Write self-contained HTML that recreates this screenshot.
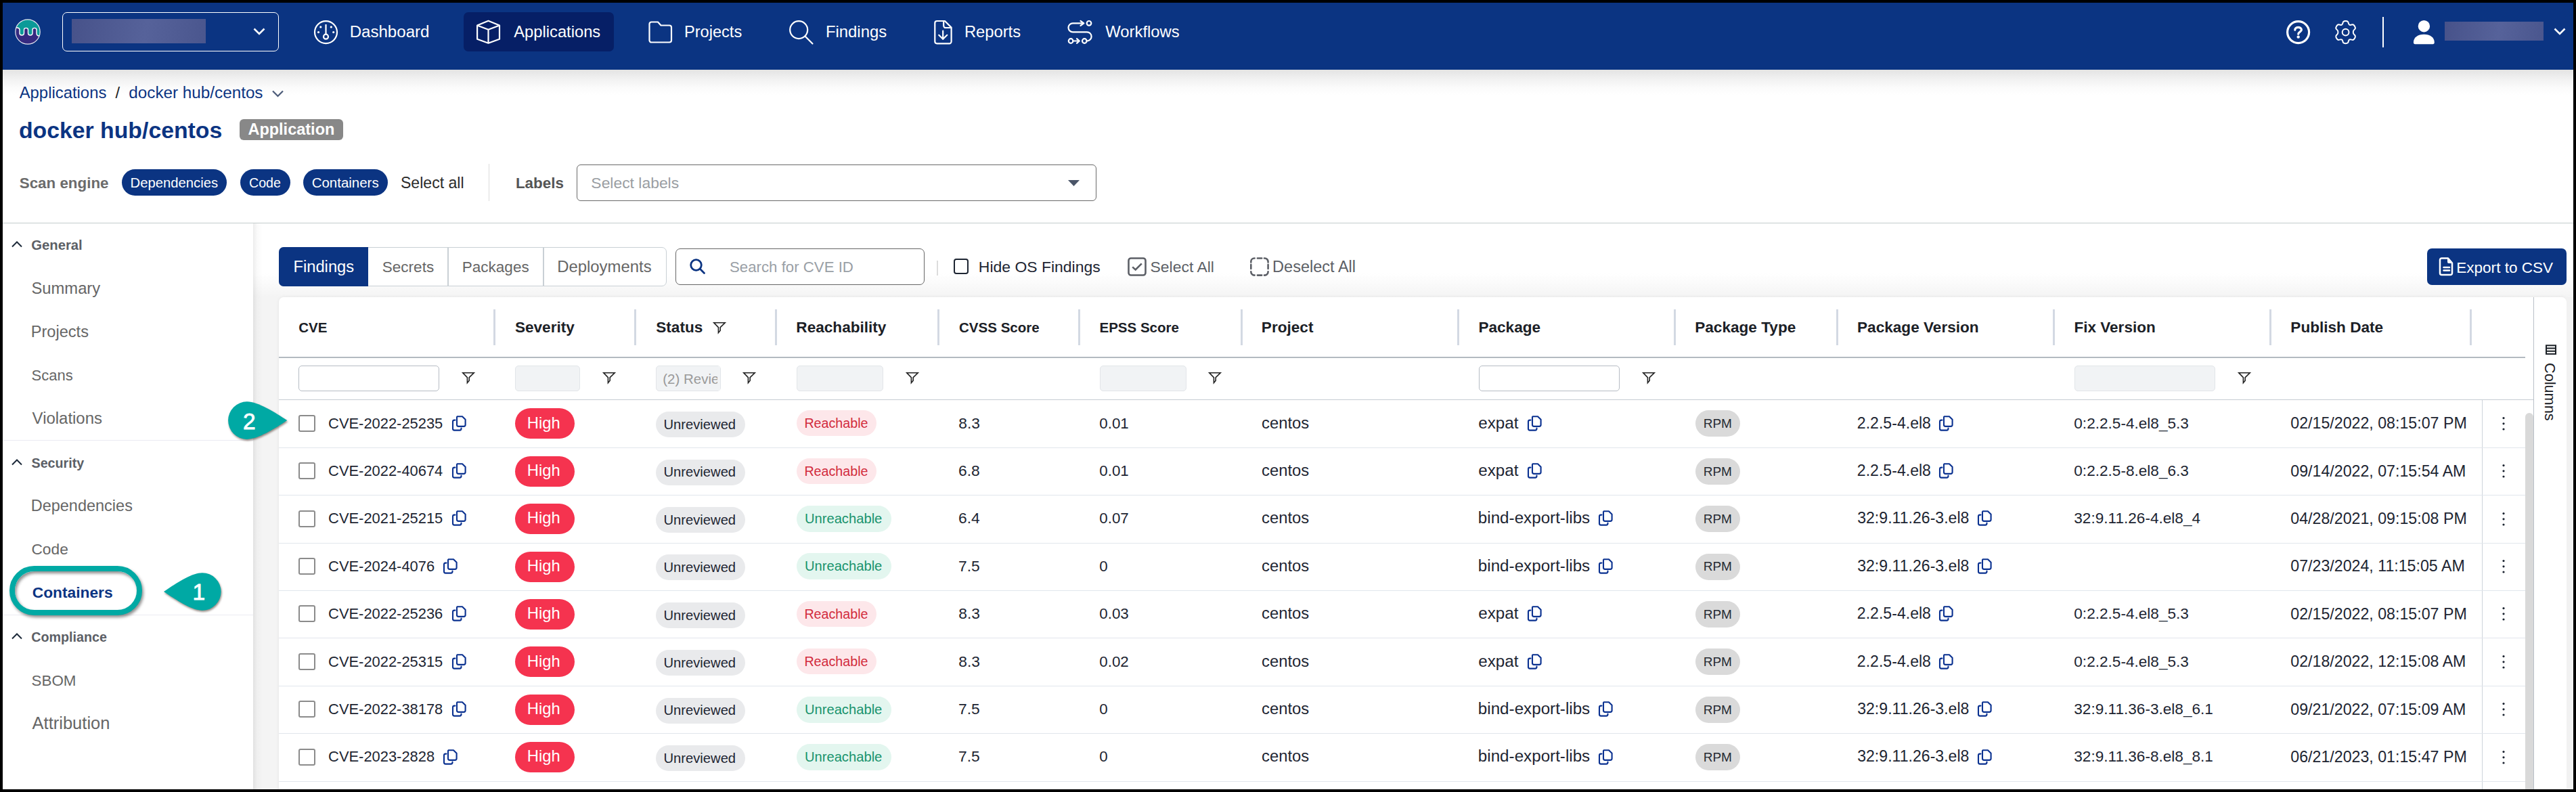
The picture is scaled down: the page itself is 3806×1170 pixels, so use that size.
<!DOCTYPE html>
<html><head><meta charset="utf-8"><title>docker hub/centos</title><style>*{margin:0;padding:0}
html,body{width:3806px;height:1170px;overflow:hidden;background:#000}
body{position:relative;font-family:"Liberation Sans",sans-serif}
.r{position:absolute;display:block}
.t{position:absolute;white-space:nowrap;font-family:"Liberation Sans",sans-serif}
</style></head>
<body>
<div class="r" style="left:4px;top:4px;width:3798px;height:1162px;background:#fff"></div>
<div class="r" style="left:4px;top:4px;width:3798px;height:99px;background:#0b3482"></div><svg class="r" style="left:20px;top:26px;" width="42" height="42" viewBox="0 0 42 42">
<defs><clipPath id="lc"><circle cx="21" cy="21" r="18.2"/></clipPath></defs>
<circle cx="21" cy="21" r="18.2" fill="#352a80"/>
<g clip-path="url(#lc)">
<path d="M0,0 H42 V27 L38,27 C36,27 34,26 34,23 V18 C34,14.5 28,14.5 28,18 V23 C28,27 21.5,27 21.5,23 V18 C21.5,14.5 15.5,14.5 15.5,18 V23 C15.5,27 9,27 9,23 V18 C9,14.5 4,14 0,16 Z" fill="#0b9a98" stroke="#fff" stroke-width="1.4"/>
</g>
<circle cx="21" cy="21" r="18.2" fill="none" stroke="#e8e8f0" stroke-width="1.2"/>
</svg><div class="r" style="left:92px;top:18px;width:320px;height:58px;border:1.6px solid #fff;border-radius:7px;box-sizing:border-box"></div><div class="r" style="left:106px;top:28px;width:198px;height:36px;background:linear-gradient(100deg,#47528a,#56629a 55%,#4a568e);"></div><svg class="r" style="left:372px;top:38px;" width="22" height="18" viewBox="0 0 22 18"><path d="M3.5,4.5 L11,12 L18.5,4.5" fill="none" stroke="#fff" stroke-width="2.6"/></svg><svg class="r" style="left:462px;top:28px;" width="40" height="40" viewBox="0 0 40 40"><g fill="none" stroke="#fff" stroke-width="2.2">
<circle cx="19.5" cy="19.6" r="16.5"/><line x1="19.5" y1="8" x2="19.5" y2="22.5"/><circle cx="19.5" cy="26.2" r="3.5"/></g>
<g fill="#fff"><circle cx="11.8" cy="11.9" r="1.6"/><circle cx="27.3" cy="11.9" r="1.6"/><circle cx="8.5" cy="19.6" r="1.6"/><circle cx="30.7" cy="19.6" r="1.6"/></g></svg><div class="t" style="left:516.67px;top:33.30px;font-size:24.08px;line-height:27px;color:#fff;">Dashboard</div><div class="r" style="left:685px;top:18px;width:222px;height:58px;background:#061f66;border-radius:7px"></div><svg class="r" style="left:700px;top:27px;" width="44" height="42" viewBox="0 0 44 42"><g fill="none" stroke="#fff" stroke-width="2.2" stroke-linejoin="round">
<path d="M21.5,3.8 L38,10.5 V30.7 L21.5,36.7 L5.1,30.7 V10.5 Z"/><path d="M5.1,10.5 L21.5,16.8 L38,10.5 M21.5,16.8 V36.7"/></g></svg><div class="t" style="left:759.30px;top:34.30px;font-size:23.73px;line-height:26px;color:#fff;">Applications</div><svg class="r" style="left:955px;top:29px;" width="42" height="38" viewBox="0 0 42 38"><path d="M4.5,6.5 A3,3 0 0 1 7.5,3.5 H17 L21.5,8.5 H34 A3,3 0 0 1 37,11.5 V30.5 A3,3 0 0 1 34,33.5 H7.5 A3,3 0 0 1 4.5,30.5 Z" fill="none" stroke="#fff" stroke-width="2.2" stroke-linejoin="round"/></svg><div class="t" style="left:1010.91px;top:34.30px;font-size:23.61px;line-height:26px;color:#fff;">Projects</div><svg class="r" style="left:1162px;top:27px;" width="44" height="42" viewBox="0 0 44 42"><g fill="none" stroke="#fff" stroke-width="2.2"><circle cx="18.2" cy="17.1" r="13"/><line x1="27.5" y1="26.5" x2="38.5" y2="37.5" stroke-linecap="round"/></g></svg><div class="t" style="left:1219.89px;top:33.30px;font-size:23.90px;line-height:27px;color:#fff;">Findings</div><svg class="r" style="left:1377px;top:27px;" width="34" height="42" viewBox="0 0 34 42"><g fill="none" stroke="#fff" stroke-width="2.2" stroke-linejoin="round">
<path d="M7.3,4 H19 L28.6,13.6 V34.3 A3,3 0 0 1 25.6,37.3 H7.3 A3,3 0 0 1 4.3,34.3 V7 A3,3 0 0 1 7.3,4 Z"/>
<path d="M17.2,4 V11 A3,3 0 0 0 20.2,14 H28.6"/>
<path d="M16.2,18.7 V31 M10.2,24.8 L16.2,30.8 L22.3,24.8" stroke-linecap="round"/></g></svg><div class="t" style="left:1424.90px;top:33.30px;font-size:23.75px;line-height:27px;color:#fff;">Reports</div><svg class="r" style="left:1574px;top:27px;" width="44" height="42" viewBox="0 0 44 42"><g fill="none" stroke="#fff" stroke-width="2.2" stroke-linecap="round" stroke-linejoin="round">
<path d="M26.5,7.3 H11 A6.5,6.5 0 0 0 11,20.3 H32 A6.6,6.6 0 0 1 32,33.5 H31.5"/>
<path d="M22.5,3.8 L27.3,7.3 L22.5,10.8"/>
<circle cx="35" cy="7.3" r="3.3"/><circle cx="28.3" cy="33.5" r="3.3"/><circle cx="8.1" cy="33.5" r="3.3"/>
<path d="M11.5,33.5 H20.5 M17,30.2 L20.8,33.5 L17,36.8"/></g></svg><div class="t" style="left:1633.30px;top:33.30px;font-size:23.84px;line-height:27px;color:#fff;">Workflows</div><svg class="r" style="left:3374px;top:26px;" width="44" height="44" viewBox="0 0 44 44"><g fill="none" stroke="#fff" stroke-width="3.2"><circle cx="21.6" cy="21.6" r="16"/>
<path d="M16.8,18.2 C16.8,13.2 26.4,13.2 26.4,18 C26.4,21 21.7,21.5 21.7,24.2" stroke-linecap="round"/></g><circle cx="21.7" cy="28.6" r="2.2" fill="#fff"/></svg><svg class="r" style="left:3444px;top:26px;" width="44" height="44" viewBox="0 0 44 44"><g fill="none" stroke="#fff" stroke-width="2.1" stroke-linejoin="round" transform="translate(21.6 21.6) scale(0.94) translate(-21.6 -21.6)">
<path d="M17.9,5.2 C19.5,3.6 23.7,3.6 25.3,5.2 C26,6 26,9.2 27.6,10 C29.2,10.9 31.9,9.2 33.1,9.5 C35.2,10.1 37.3,13.8 36.7,15.9 C36.4,17 33.6,18.5 33.6,20.3 V22.9 C33.6,24.7 36.4,26.2 36.7,27.3 C37.3,29.4 35.2,33.1 33.1,33.7 C31.9,34 29.2,32.3 27.6,33.2 C26,34 26,37.2 25.3,38 C23.7,39.6 19.5,39.6 17.9,38 C17.2,37.2 17.2,34 15.6,33.2 C14,32.3 11.3,34 10.1,33.7 C8,33.1 5.9,29.4 6.5,27.3 C6.8,26.2 9.6,24.7 9.6,22.9 V20.3 C9.6,18.5 6.8,17 6.5,15.9 C5.9,13.8 8,10.1 10.1,9.5 C11.3,9.2 14,10.9 15.6,10 C17.2,9.2 17.2,6 17.9,5.2 Z"/>
<circle cx="21.6" cy="21.6" r="5.2"/></g></svg><div class="r" style="left:3520px;top:25px;width:2px;height:45px;background:#fff"></div><svg class="r" style="left:3562px;top:26px;" width="38" height="42" viewBox="0 0 38 42"><g fill="#fff"><circle cx="19.4" cy="12.7" r="8.7"/><path d="M3.9,36.8 C3.9,29 10.5,24.7 19.4,24.7 C28.3,24.7 34.8,29 34.8,36.8 C34.8,38.3 34,39.3 32.5,39.3 H6.2 C4.7,39.3 3.9,38.3 3.9,36.8 Z"/></g></svg><div class="r" style="left:3612px;top:32px;width:146px;height:28px;background:linear-gradient(100deg,#47528a,#56629a 55%,#4a568e);"></div><svg class="r" style="left:3771px;top:38px;" width="22" height="18" viewBox="0 0 22 18"><path d="M3.5,4.5 L11,12 L18.5,4.5" fill="none" stroke="#fff" stroke-width="2.6"/></svg><div class="r" style="left:4px;top:103px;width:3798px;height:38px;background:linear-gradient(#e3e3e3,#f1f1f1 35%,#fbfbfb 70%,#fff)"></div><div class="t" style="left:28.70px;top:123.20px;font-size:23.87px;line-height:27px;color:#0b3482;">Applications</div><div class="t" style="left:170.60px;top:124.20px;font-size:23.70px;line-height:26px;color:#222;">/</div><div class="t" style="left:190.33px;top:123.20px;font-size:24.25px;line-height:27px;color:#0b3482;">docker hub/centos</div><svg class="r" style="left:399px;top:130px;" width="24" height="18" viewBox="0 0 24 18"><path d="M4,4.5 L11.5,12 L19,4.5" fill="none" stroke="#4b5a78" stroke-width="2.2"/></svg><div class="t" style="left:27.95px;top:173.30px;font-size:33.79px;line-height:38px;color:#0b3482;font-weight:700;">docker hub/centos</div><div class="r" style="left:354px;top:176px;width:153px;height:31px;background:#888;border-radius:6px"></div><div class="t" style="left:366.41px;top:178.00px;font-size:23.51px;line-height:26px;color:#fff;font-weight:700;">Application</div><div class="t" style="left:28.74px;top:257.50px;font-size:22.38px;line-height:25px;color:#6b6b6b;font-weight:700;">Scan engine</div><div class="r" style="left:180px;top:250px;width:155px;height:39px;background:#0b3482;border-radius:20px"></div><div class="t" style="left:192.58px;top:259.30px;font-size:20.25px;line-height:22px;color:#fff;">Dependencies</div><div class="r" style="left:355px;top:250px;width:74px;height:39px;background:#0b3482;border-radius:20px"></div><div class="t" style="left:368.02px;top:259.30px;font-size:19.65px;line-height:22px;color:#fff;">Code</div><div class="r" style="left:448px;top:250px;width:125px;height:39px;background:#0b3482;border-radius:20px"></div><div class="t" style="left:460.68px;top:258.30px;font-size:20.48px;line-height:23px;color:#fff;">Containers</div><div class="t" style="left:591.96px;top:256.50px;font-size:23.09px;line-height:26px;color:#2b2b2b;">Select all</div><div class="r" style="left:722px;top:242px;width:1px;height:55px;background:#dcdcdc"></div><div class="t" style="left:761.95px;top:257.50px;font-size:22.38px;line-height:25px;color:#555;font-weight:700;">Labels</div><div class="r" style="left:852px;top:243px;width:768px;height:54px;border:1.6px solid #6a6a6a;border-radius:6px;box-sizing:border-box;background:#fff"></div><div class="t" style="left:873.37px;top:256.50px;font-size:22.90px;line-height:26px;color:#9a9ea3;">Select labels</div><svg class="r" style="left:1576px;top:264px;" width="22" height="14" viewBox="0 0 22 14"><path d="M2,2 H19 L10.5,11 Z" fill="#4a5568"/></svg><div class="r" style="left:4px;top:329px;width:3798px;height:1px;background:#c3cbcb"></div><div class="r" style="left:4px;top:330px;width:370px;height:836px;background:#fff"></div><svg class="r" style="left:15px;top:353.6px;" width="20" height="14" viewBox="0 0 20 14"><path d="M3,10.5 L10,3.5 L17,10.5" fill="none" stroke="#1d2a3a" stroke-width="2"/></svg><div class="t" style="left:46.19px;top:351.00px;font-size:20.30px;line-height:22px;color:#5c5f66;font-weight:700;">General</div><div class="t" style="left:46.53px;top:412.00px;font-size:23.75px;line-height:27px;color:#666;">Summary</div><div class="t" style="left:45.71px;top:477.40px;font-size:23.61px;line-height:26px;color:#666;">Projects</div><div class="t" style="left:46.61px;top:542.20px;font-size:22.04px;line-height:25px;color:#666;">Scans</div><div class="t" style="left:47.60px;top:604.00px;font-size:23.94px;line-height:27px;color:#666;">Violations</div><div class="r" style="left:4px;top:650px;width:370px;height:1px;background:#ebebf2"></div><svg class="r" style="left:15px;top:676px;" width="20" height="14" viewBox="0 0 20 14"><path d="M3,10.5 L10,3.5 L17,10.5" fill="none" stroke="#1d2a3a" stroke-width="2"/></svg><div class="t" style="left:46.51px;top:672.50px;font-size:19.69px;line-height:22px;color:#5c5f66;font-weight:700;">Security</div><div class="t" style="left:45.72px;top:734.00px;font-size:23.49px;line-height:26px;color:#666;">Dependencies</div><div class="t" style="left:46.46px;top:798.00px;font-size:22.74px;line-height:26px;color:#666;">Code</div><div class="r" style="left:4px;top:908px;width:370px;height:1px;background:#ebebf2"></div><svg class="r" style="left:15px;top:933px;" width="20" height="14" viewBox="0 0 20 14"><path d="M3,10.5 L10,3.5 L17,10.5" fill="none" stroke="#1d2a3a" stroke-width="2"/></svg><div class="t" style="left:46.21px;top:929.60px;font-size:19.73px;line-height:22px;color:#5c5f66;font-weight:700;">Compliance</div><div class="t" style="left:46.59px;top:993.00px;font-size:22.38px;line-height:25px;color:#666;">SBOM</div><div class="t" style="left:47.60px;top:1054.00px;font-size:25.50px;line-height:28px;color:#666;">Attribution</div><div class="r" style="left:374px;top:330px;width:3428px;height:836px;background:linear-gradient(#fff 0px,#fff 74px,#f4f4f4 109px,#f4f4f4 100%)"></div><div class="r" style="left:374px;top:330px;width:38px;height:836px;background:linear-gradient(90deg,rgba(0,0,0,0.075),rgba(0,0,0,0.02) 6px,rgba(0,0,0,0) 14px)"></div><div class="r" style="left:412px;top:365px;width:573px;height:58px;border:1px solid #c9d0d5;border-radius:7px;box-sizing:border-box;background:#fff"></div><div class="r" style="left:412px;top:365px;width:132px;height:58px;background:#0b3482;border-radius:7px 0 0 7px"></div><div class="r" style="left:661px;top:366px;width:2px;height:56px;background:#c9d0d5"></div><div class="r" style="left:802px;top:366px;width:2px;height:56px;background:#c9d0d5"></div><div class="t" style="left:433.50px;top:380.70px;font-size:23.71px;line-height:26px;color:#fff;">Findings</div><div class="t" style="left:564.79px;top:381.70px;font-size:22.54px;line-height:25px;color:#666;">Secrets</div><div class="t" style="left:682.80px;top:381.70px;font-size:22.53px;line-height:25px;color:#666;">Packages</div><div class="t" style="left:823.19px;top:379.70px;font-size:23.90px;line-height:27px;color:#666;">Deployments</div><div class="r" style="left:998px;top:367px;width:368px;height:54px;border:1.6px solid #666;border-radius:7px;box-sizing:border-box;background:#fff"></div><svg class="r" style="left:1017px;top:380px;" width="28" height="28" viewBox="0 0 28 28"><g fill="none" stroke="#0b3482" stroke-width="2.8"><circle cx="11.5" cy="11.5" r="7.8"/><line x1="17.3" y1="17.3" x2="23.5" y2="23.5" stroke-linecap="round"/></g></svg><div class="t" style="left:1078.00px;top:381.80px;font-size:22.24px;line-height:25px;color:#9aa0a6;">Search for CVE ID</div><div class="r" style="left:1384px;top:385px;width:2px;height:22px;background:#dcdcdc"></div><div class="r" style="left:1409px;top:382px;width:22px;height:23px;border:2.6px solid #1d2532;border-radius:4px;box-sizing:border-box;background:#fff"></div><div class="t" style="left:1445.86px;top:381.20px;font-size:22.94px;line-height:26px;color:#1d2532;">Hide OS Findings</div><svg class="r" style="left:1664px;top:378px;" width="32" height="32" viewBox="0 0 32 32"><rect x="3.5" y="3.5" width="25" height="25" rx="3.5" fill="none" stroke="#5c5f66" stroke-width="2.6"/><path d="M9.2,16.4 L13.7,20.5 L22.8,11.3" fill="none" stroke="#5c5f66" stroke-width="2.6"/></svg><div class="t" style="left:1699.57px;top:381.20px;font-size:22.95px;line-height:26px;color:#5c5f66;">Select All</div><svg class="r" style="left:1845px;top:378px;" width="32" height="32" viewBox="0 0 32 32"><path d="M3.3,9.4 V8.5 A5,5 0 0 1 8.3,3.5 H8.6 M12.9,3.5 H19.2 M23,3.5 H23.6 A5,5 0 0 1 28.6,8.5 V9.4 M3.3,12.9 V19 M28.6,12.9 V19 M3.3,23.3 V23.6 A5,5 0 0 0 8.3,28.6 H8.6 M12.9,28.6 H19.2 M23,28.6 H23.6 A5,5 0 0 0 28.6,23.6 V23.3" fill="none" stroke="#5c5f66" stroke-width="2.6" stroke-linecap="round"/></svg><div class="t" style="left:1880.12px;top:381.20px;font-size:23.54px;line-height:26px;color:#5c5f66;">Deselect All</div><div class="r" style="left:3586px;top:367px;width:206px;height:54px;background:#0b3482;border-radius:7px"></div><svg class="r" style="left:3602px;top:378px;" width="26" height="32" viewBox="0 0 26 32"><g fill="none" stroke="#fff" stroke-width="2.5" stroke-linejoin="round"><path d="M5.5,3.5 H15 L21,10.5 V25.5 A2.5,2.5 0 0 1 18.5,28 H5.5 A2.5,2.5 0 0 1 3,25.5 V6 A2.5,2.5 0 0 1 5.5,3.5 Z"/><path d="M8.5,17 H17 M8.5,21.5 H17" stroke-linecap="round"/></g><path d="M14,3.5 V9 A2,2 0 0 0 16,11 H21 Z" fill="#fff"/></svg><div class="t" style="left:3629.19px;top:382.50px;font-size:22.57px;line-height:25px;color:#fff;">Export to CSV</div>
<div class="r" style="left:0;top:0;width:3806px;height:1166px;overflow:hidden"><div class="r" style="left:412px;top:439px;width:3380px;height:751px;background:#fff;border-radius:7px;box-shadow:0 0 5px rgba(0,0,0,0.07)"></div><div class="r" style="left:729px;top:457px;width:3px;height:53px;background:#d3d9e3"></div><div class="r" style="left:937px;top:457px;width:3px;height:53px;background:#d3d9e3"></div><div class="r" style="left:1145px;top:457px;width:3px;height:53px;background:#d3d9e3"></div><div class="r" style="left:1385px;top:457px;width:3px;height:53px;background:#d3d9e3"></div><div class="r" style="left:1593px;top:457px;width:3px;height:53px;background:#d3d9e3"></div><div class="r" style="left:1833px;top:457px;width:3px;height:53px;background:#d3d9e3"></div><div class="r" style="left:2153px;top:457px;width:3px;height:53px;background:#d3d9e3"></div><div class="r" style="left:2473px;top:457px;width:3px;height:53px;background:#d3d9e3"></div><div class="r" style="left:2713px;top:457px;width:3px;height:53px;background:#d3d9e3"></div><div class="r" style="left:3033px;top:457px;width:3px;height:53px;background:#d3d9e3"></div><div class="r" style="left:3353px;top:457px;width:3px;height:53px;background:#d3d9e3"></div><div class="r" style="left:3649px;top:457px;width:3px;height:53px;background:#d3d9e3"></div><div class="t" style="left:441.28px;top:472.00px;font-size:20.50px;line-height:23px;color:#1b2026;font-weight:700;">CVE</div><div class="t" style="left:760.94px;top:471.00px;font-size:22.59px;line-height:25px;color:#1b2026;font-weight:700;">Severity</div><div class="t" style="left:969.23px;top:471.00px;font-size:22.60px;line-height:25px;color:#1b2026;font-weight:700;">Status</div><div class="t" style="left:1176.33px;top:471.00px;font-size:22.60px;line-height:25px;color:#1b2026;font-weight:700;">Reachability</div><div class="t" style="left:1416.98px;top:472.00px;font-size:20.56px;line-height:23px;color:#1b2026;font-weight:700;">CVSS Score</div><div class="t" style="left:1624.47px;top:472.00px;font-size:20.52px;line-height:23px;color:#1b2026;font-weight:700;">EPSS Score</div><div class="t" style="left:1863.83px;top:471.00px;font-size:22.60px;line-height:25px;color:#1b2026;font-weight:700;">Project</div><div class="t" style="left:2184.43px;top:471.00px;font-size:22.60px;line-height:25px;color:#1b2026;font-weight:700;">Package</div><div class="t" style="left:2504.23px;top:471.00px;font-size:22.60px;line-height:25px;color:#1b2026;font-weight:700;">Package Type</div><div class="t" style="left:2744.03px;top:471.00px;font-size:22.60px;line-height:25px;color:#1b2026;font-weight:700;">Package Version</div><div class="t" style="left:3064.54px;top:471.00px;font-size:22.53px;line-height:25px;color:#1b2026;font-weight:700;">Fix Version</div><div class="t" style="left:3384.33px;top:471.00px;font-size:22.60px;line-height:25px;color:#1b2026;font-weight:700;">Publish Date</div><svg class="r" style="left:1052px;top:474px;" width="22" height="21" viewBox="0 0 22 21"><path d="M2.8,2.8 H19.2 L12.2,9.6 V14.2 L9.4,17.6 V9.6 Z" fill="none" stroke="#222" stroke-width="1.6" stroke-linejoin="miter"/></svg><div class="r" style="left:412px;top:527px;width:3319px;height:2px;background:#b3bac1"></div><div class="r" style="left:441px;top:540px;width:208px;height:38px;background:#fff;border:1px solid #b6bcc4;border-radius:5px;box-sizing:border-box"></div><div class="r" style="left:761px;top:540px;width:96px;height:38px;background:#f1f3f5;border:1px solid #e2e5e9;border-radius:5px;box-sizing:border-box"></div><div class="r" style="left:969px;top:540px;width:96px;height:38px;background:#f1f3f5;border:1px solid #e2e5e9;border-radius:5px;box-sizing:border-box"></div><div class="r" style="left:1177px;top:540px;width:128px;height:38px;background:#f1f3f5;border:1px solid #e2e5e9;border-radius:5px;box-sizing:border-box"></div><div class="r" style="left:1625px;top:540px;width:128px;height:38px;background:#f1f3f5;border:1px solid #e2e5e9;border-radius:5px;box-sizing:border-box"></div><div class="r" style="left:2185px;top:540px;width:208px;height:38px;background:#fff;border:1px solid #b6bcc4;border-radius:5px;box-sizing:border-box"></div><div class="r" style="left:3065px;top:540px;width:208px;height:38px;background:#f1f3f5;border:1px solid #e2e5e9;border-radius:5px;box-sizing:border-box"></div><div class="t" style="left:979.27px;top:547.50px;font-size:20.50px;line-height:23px;color:#9a9a9a;">(2) Revie</div><div class="r" style="left:1060px;top:541px;width:4px;height:36px;background:#f1f3f5"></div><svg class="r" style="left:681px;top:548px;" width="22" height="21" viewBox="0 0 22 21"><path d="M2.8,2.8 H19.2 L12.2,9.6 V14.2 L9.4,17.6 V9.6 Z" fill="none" stroke="#222" stroke-width="1.6" stroke-linejoin="miter"/></svg><svg class="r" style="left:889px;top:548px;" width="22" height="21" viewBox="0 0 22 21"><path d="M2.8,2.8 H19.2 L12.2,9.6 V14.2 L9.4,17.6 V9.6 Z" fill="none" stroke="#222" stroke-width="1.6" stroke-linejoin="miter"/></svg><svg class="r" style="left:1096px;top:548px;" width="22" height="21" viewBox="0 0 22 21"><path d="M2.8,2.8 H19.2 L12.2,9.6 V14.2 L9.4,17.6 V9.6 Z" fill="none" stroke="#222" stroke-width="1.6" stroke-linejoin="miter"/></svg><svg class="r" style="left:1337px;top:548px;" width="22" height="21" viewBox="0 0 22 21"><path d="M2.8,2.8 H19.2 L12.2,9.6 V14.2 L9.4,17.6 V9.6 Z" fill="none" stroke="#222" stroke-width="1.6" stroke-linejoin="miter"/></svg><svg class="r" style="left:1784px;top:548px;" width="22" height="21" viewBox="0 0 22 21"><path d="M2.8,2.8 H19.2 L12.2,9.6 V14.2 L9.4,17.6 V9.6 Z" fill="none" stroke="#222" stroke-width="1.6" stroke-linejoin="miter"/></svg><svg class="r" style="left:2425px;top:548px;" width="22" height="21" viewBox="0 0 22 21"><path d="M2.8,2.8 H19.2 L12.2,9.6 V14.2 L9.4,17.6 V9.6 Z" fill="none" stroke="#222" stroke-width="1.6" stroke-linejoin="miter"/></svg><svg class="r" style="left:3305px;top:548px;" width="22" height="21" viewBox="0 0 22 21"><path d="M2.8,2.8 H19.2 L12.2,9.6 V14.2 L9.4,17.6 V9.6 Z" fill="none" stroke="#222" stroke-width="1.6" stroke-linejoin="miter"/></svg><div class="r" style="left:412px;top:590px;width:3331px;height:1px;background:#c6ccd3"></div><div class="r" style="left:3743px;top:439px;width:1px;height:727px;background:#b9c0c8"></div><div class="r" style="left:3667px;top:591px;width:1px;height:575px;background:#cdd3da"></div><div class="r" style="left:412px;top:661px;width:3319px;height:1px;background:#e1e6ec"></div><div class="r" style="left:441px;top:613px;width:25px;height:25px;border:2.6px solid #8b8b8b;border-radius:3px;box-sizing:border-box"></div><div class="t" style="left:485.10px;top:612.50px;font-size:21.90px;line-height:25px;color:#1d2532;">CVE-2022-25235</div><svg class="r" style="left:666px;top:612px;" width="26" height="28" viewBox="0 0 26 28"><g fill="none" stroke="#0a3190" stroke-width="2.1" stroke-linecap="round" stroke-linejoin="round"><path d="M9.8,3.2 H17 L21.6,7.8 V15.5 A2.4,2.4 0 0 1 19.2,17.9 H11.4 A2.4,2.4 0 0 1 9,15.5 V4.8 A1.6,1.6 0 0 1 9.8,3.2 Z"/><path d="M6.5,8.6 H5.3 A2.3,2.3 0 0 0 3,10.9 V21.3 A2.3,2.3 0 0 0 5.3,23.6 H13.2 A2.3,2.3 0 0 0 15.5,21.3 V20.5"/></g></svg><div class="r" style="left:761px;top:603px;width:88px;height:45px;background:#f5334f;border-radius:23px"></div><div class="t" style="left:778.80px;top:610.50px;font-size:23.80px;line-height:27px;color:#fff;">High</div><div class="r" style="left:969px;top:608px;width:132px;height:38px;background:#e9eaec;border-radius:19px"></div><div class="t" style="left:980.49px;top:616.00px;font-size:20.20px;line-height:22px;color:#1d2532;">Unreviewed</div><div class="r" style="left:1177px;top:606px;width:118px;height:38px;background:#fde7ea;border-radius:19px"></div><div class="t" style="left:1188.42px;top:614.10px;font-size:19.70px;line-height:22px;color:#d22a3c;">Reachable</div><div class="t" style="left:1416.29px;top:611.60px;font-size:22.80px;line-height:26px;color:#1d2532;">8.3</div><div class="t" style="left:1624.32px;top:612.60px;font-size:22.30px;line-height:25px;color:#1d2532;">0.01</div><div class="t" style="left:1864.05px;top:610.60px;font-size:23.80px;line-height:27px;color:#1d2532;">centos</div><div class="t" style="left:2184.33px;top:610.60px;font-size:24.20px;line-height:27px;color:#1d2532;">expat</div><svg class="r" style="left:2255px;top:612px;" width="26" height="28" viewBox="0 0 26 28"><g fill="none" stroke="#0a3190" stroke-width="2.1" stroke-linecap="round" stroke-linejoin="round"><path d="M9.8,3.2 H17 L21.6,7.8 V15.5 A2.4,2.4 0 0 1 19.2,17.9 H11.4 A2.4,2.4 0 0 1 9,15.5 V4.8 A1.6,1.6 0 0 1 9.8,3.2 Z"/><path d="M6.5,8.6 H5.3 A2.3,2.3 0 0 0 3,10.9 V21.3 A2.3,2.3 0 0 0 5.3,23.6 H13.2 A2.3,2.3 0 0 0 15.5,21.3 V20.5"/></g></svg><div class="r" style="left:2505px;top:606px;width:66px;height:39px;background:#dadada;border-radius:20px"></div><div class="t" style="left:2516.68px;top:615.10px;font-size:19.00px;line-height:21px;color:#262b33;">RPM</div><div class="t" style="left:2743.84px;top:611.60px;font-size:23.10px;line-height:26px;color:#1d2532;">2.2.5-4.el8</div><svg class="r" style="left:2863px;top:612px;" width="26" height="28" viewBox="0 0 26 28"><g fill="none" stroke="#0a3190" stroke-width="2.1" stroke-linecap="round" stroke-linejoin="round"><path d="M9.8,3.2 H17 L21.6,7.8 V15.5 A2.4,2.4 0 0 1 19.2,17.9 H11.4 A2.4,2.4 0 0 1 9,15.5 V4.8 A1.6,1.6 0 0 1 9.8,3.2 Z"/><path d="M6.5,8.6 H5.3 A2.3,2.3 0 0 0 3,10.9 V21.3 A2.3,2.3 0 0 0 5.3,23.6 H13.2 A2.3,2.3 0 0 0 15.5,21.3 V20.5"/></g></svg><div class="t" style="left:3064.31px;top:612.60px;font-size:22.60px;line-height:25px;color:#1d2532;">0:2.2.5-4.el8_5.3</div><div class="t" style="left:3384.29px;top:612.20px;font-size:23.20px;line-height:26px;color:#1d2532;">02/15/2022, 08:15:07 PM</div><svg class="r" style="left:3693px;top:613px;" width="12" height="26" viewBox="0 0 12 26"><g fill="#1d2532"><circle cx="6" cy="4.6" r="1.6"/><circle cx="6" cy="12.8" r="1.6"/><circle cx="6" cy="21" r="1.6"/></g></svg><div class="r" style="left:412px;top:731px;width:3319px;height:1px;background:#e1e6ec"></div><div class="r" style="left:441px;top:683px;width:25px;height:25px;border:2.6px solid #8b8b8b;border-radius:3px;box-sizing:border-box"></div><div class="t" style="left:485.10px;top:682.90px;font-size:21.90px;line-height:25px;color:#1d2532;">CVE-2022-40674</div><svg class="r" style="left:666px;top:682px;" width="26" height="28" viewBox="0 0 26 28"><g fill="none" stroke="#0a3190" stroke-width="2.1" stroke-linecap="round" stroke-linejoin="round"><path d="M9.8,3.2 H17 L21.6,7.8 V15.5 A2.4,2.4 0 0 1 19.2,17.9 H11.4 A2.4,2.4 0 0 1 9,15.5 V4.8 A1.6,1.6 0 0 1 9.8,3.2 Z"/><path d="M6.5,8.6 H5.3 A2.3,2.3 0 0 0 3,10.9 V21.3 A2.3,2.3 0 0 0 5.3,23.6 H13.2 A2.3,2.3 0 0 0 15.5,21.3 V20.5"/></g></svg><div class="r" style="left:761px;top:674px;width:88px;height:45px;background:#f5334f;border-radius:23px"></div><div class="t" style="left:778.80px;top:680.90px;font-size:23.80px;line-height:27px;color:#fff;">High</div><div class="r" style="left:969px;top:679px;width:132px;height:38px;background:#e9eaec;border-radius:19px"></div><div class="t" style="left:980.49px;top:686.40px;font-size:20.20px;line-height:22px;color:#1d2532;">Unreviewed</div><div class="r" style="left:1177px;top:677px;width:118px;height:38px;background:#fde7ea;border-radius:19px"></div><div class="t" style="left:1188.42px;top:684.50px;font-size:19.70px;line-height:22px;color:#d22a3c;">Reachable</div><div class="t" style="left:1416.06px;top:682.00px;font-size:22.80px;line-height:26px;color:#1d2532;">6.8</div><div class="t" style="left:1624.32px;top:683.00px;font-size:22.30px;line-height:25px;color:#1d2532;">0.01</div><div class="t" style="left:1864.05px;top:681.00px;font-size:23.80px;line-height:27px;color:#1d2532;">centos</div><div class="t" style="left:2184.33px;top:681.00px;font-size:24.20px;line-height:27px;color:#1d2532;">expat</div><svg class="r" style="left:2255px;top:682px;" width="26" height="28" viewBox="0 0 26 28"><g fill="none" stroke="#0a3190" stroke-width="2.1" stroke-linecap="round" stroke-linejoin="round"><path d="M9.8,3.2 H17 L21.6,7.8 V15.5 A2.4,2.4 0 0 1 19.2,17.9 H11.4 A2.4,2.4 0 0 1 9,15.5 V4.8 A1.6,1.6 0 0 1 9.8,3.2 Z"/><path d="M6.5,8.6 H5.3 A2.3,2.3 0 0 0 3,10.9 V21.3 A2.3,2.3 0 0 0 5.3,23.6 H13.2 A2.3,2.3 0 0 0 15.5,21.3 V20.5"/></g></svg><div class="r" style="left:2505px;top:677px;width:66px;height:39px;background:#dadada;border-radius:20px"></div><div class="t" style="left:2516.68px;top:685.50px;font-size:19.00px;line-height:21px;color:#262b33;">RPM</div><div class="t" style="left:2743.84px;top:682.00px;font-size:23.10px;line-height:26px;color:#1d2532;">2.2.5-4.el8</div><svg class="r" style="left:2863px;top:682px;" width="26" height="28" viewBox="0 0 26 28"><g fill="none" stroke="#0a3190" stroke-width="2.1" stroke-linecap="round" stroke-linejoin="round"><path d="M9.8,3.2 H17 L21.6,7.8 V15.5 A2.4,2.4 0 0 1 19.2,17.9 H11.4 A2.4,2.4 0 0 1 9,15.5 V4.8 A1.6,1.6 0 0 1 9.8,3.2 Z"/><path d="M6.5,8.6 H5.3 A2.3,2.3 0 0 0 3,10.9 V21.3 A2.3,2.3 0 0 0 5.3,23.6 H13.2 A2.3,2.3 0 0 0 15.5,21.3 V20.5"/></g></svg><div class="t" style="left:3064.31px;top:683.00px;font-size:22.60px;line-height:25px;color:#1d2532;">0:2.2.5-8.el8_6.3</div><div class="t" style="left:3384.29px;top:682.60px;font-size:23.20px;line-height:26px;color:#1d2532;">09/14/2022, 07:15:54 AM</div><svg class="r" style="left:3693px;top:683px;" width="12" height="26" viewBox="0 0 12 26"><g fill="#1d2532"><circle cx="6" cy="4.6" r="1.6"/><circle cx="6" cy="12.8" r="1.6"/><circle cx="6" cy="21" r="1.6"/></g></svg><div class="r" style="left:412px;top:802px;width:3319px;height:1px;background:#e1e6ec"></div><div class="r" style="left:441px;top:754px;width:25px;height:25px;border:2.6px solid #8b8b8b;border-radius:3px;box-sizing:border-box"></div><div class="t" style="left:485.10px;top:753.30px;font-size:21.90px;line-height:25px;color:#1d2532;">CVE-2021-25215</div><svg class="r" style="left:666px;top:752px;" width="26" height="28" viewBox="0 0 26 28"><g fill="none" stroke="#0a3190" stroke-width="2.1" stroke-linecap="round" stroke-linejoin="round"><path d="M9.8,3.2 H17 L21.6,7.8 V15.5 A2.4,2.4 0 0 1 19.2,17.9 H11.4 A2.4,2.4 0 0 1 9,15.5 V4.8 A1.6,1.6 0 0 1 9.8,3.2 Z"/><path d="M6.5,8.6 H5.3 A2.3,2.3 0 0 0 3,10.9 V21.3 A2.3,2.3 0 0 0 5.3,23.6 H13.2 A2.3,2.3 0 0 0 15.5,21.3 V20.5"/></g></svg><div class="r" style="left:761px;top:744px;width:88px;height:45px;background:#f5334f;border-radius:23px"></div><div class="t" style="left:778.80px;top:751.30px;font-size:23.80px;line-height:27px;color:#fff;">High</div><div class="r" style="left:969px;top:749px;width:132px;height:38px;background:#e9eaec;border-radius:19px"></div><div class="t" style="left:980.49px;top:756.80px;font-size:20.20px;line-height:22px;color:#1d2532;">Unreviewed</div><div class="r" style="left:1177px;top:747px;width:140px;height:39px;background:#e3f6ef;border-radius:20px"></div><div class="t" style="left:1188.88px;top:754.90px;font-size:20.20px;line-height:22px;color:#18936c;">Unreachable</div><div class="t" style="left:1416.06px;top:752.40px;font-size:22.80px;line-height:26px;color:#1d2532;">6.4</div><div class="t" style="left:1624.32px;top:753.40px;font-size:22.30px;line-height:25px;color:#1d2532;">0.07</div><div class="t" style="left:1864.05px;top:751.40px;font-size:23.80px;line-height:27px;color:#1d2532;">centos</div><div class="t" style="left:2183.85px;top:751.40px;font-size:24.20px;line-height:27px;color:#1d2532;">bind-export-libs</div><svg class="r" style="left:2360px;top:752px;" width="26" height="28" viewBox="0 0 26 28"><g fill="none" stroke="#0a3190" stroke-width="2.1" stroke-linecap="round" stroke-linejoin="round"><path d="M9.8,3.2 H17 L21.6,7.8 V15.5 A2.4,2.4 0 0 1 19.2,17.9 H11.4 A2.4,2.4 0 0 1 9,15.5 V4.8 A1.6,1.6 0 0 1 9.8,3.2 Z"/><path d="M6.5,8.6 H5.3 A2.3,2.3 0 0 0 3,10.9 V21.3 A2.3,2.3 0 0 0 5.3,23.6 H13.2 A2.3,2.3 0 0 0 15.5,21.3 V20.5"/></g></svg><div class="r" style="left:2505px;top:747px;width:66px;height:39px;background:#dadada;border-radius:20px"></div><div class="t" style="left:2516.68px;top:755.90px;font-size:19.00px;line-height:21px;color:#262b33;">RPM</div><div class="t" style="left:2744.19px;top:752.40px;font-size:23.10px;line-height:26px;color:#1d2532;">32:9.11.26-3.el8</div><svg class="r" style="left:2920px;top:752px;" width="26" height="28" viewBox="0 0 26 28"><g fill="none" stroke="#0a3190" stroke-width="2.1" stroke-linecap="round" stroke-linejoin="round"><path d="M9.8,3.2 H17 L21.6,7.8 V15.5 A2.4,2.4 0 0 1 19.2,17.9 H11.4 A2.4,2.4 0 0 1 9,15.5 V4.8 A1.6,1.6 0 0 1 9.8,3.2 Z"/><path d="M6.5,8.6 H5.3 A2.3,2.3 0 0 0 3,10.9 V21.3 A2.3,2.3 0 0 0 5.3,23.6 H13.2 A2.3,2.3 0 0 0 15.5,21.3 V20.5"/></g></svg><div class="t" style="left:3064.31px;top:753.40px;font-size:22.60px;line-height:25px;color:#1d2532;">32:9.11.26-4.el8_4</div><div class="t" style="left:3384.29px;top:753.00px;font-size:23.20px;line-height:26px;color:#1d2532;">04/28/2021, 09:15:08 PM</div><svg class="r" style="left:3693px;top:754px;" width="12" height="26" viewBox="0 0 12 26"><g fill="#1d2532"><circle cx="6" cy="4.6" r="1.6"/><circle cx="6" cy="12.8" r="1.6"/><circle cx="6" cy="21" r="1.6"/></g></svg><div class="r" style="left:412px;top:872px;width:3319px;height:1px;background:#e1e6ec"></div><div class="r" style="left:441px;top:824px;width:25px;height:25px;border:2.6px solid #8b8b8b;border-radius:3px;box-sizing:border-box"></div><div class="t" style="left:485.10px;top:823.70px;font-size:21.90px;line-height:25px;color:#1d2532;">CVE-2024-4076</div><svg class="r" style="left:653px;top:823px;" width="26" height="28" viewBox="0 0 26 28"><g fill="none" stroke="#0a3190" stroke-width="2.1" stroke-linecap="round" stroke-linejoin="round"><path d="M9.8,3.2 H17 L21.6,7.8 V15.5 A2.4,2.4 0 0 1 19.2,17.9 H11.4 A2.4,2.4 0 0 1 9,15.5 V4.8 A1.6,1.6 0 0 1 9.8,3.2 Z"/><path d="M6.5,8.6 H5.3 A2.3,2.3 0 0 0 3,10.9 V21.3 A2.3,2.3 0 0 0 5.3,23.6 H13.2 A2.3,2.3 0 0 0 15.5,21.3 V20.5"/></g></svg><div class="r" style="left:761px;top:815px;width:88px;height:45px;background:#f5334f;border-radius:23px"></div><div class="t" style="left:778.80px;top:821.70px;font-size:23.80px;line-height:27px;color:#fff;">High</div><div class="r" style="left:969px;top:819px;width:132px;height:38px;background:#e9eaec;border-radius:19px"></div><div class="t" style="left:980.49px;top:827.20px;font-size:20.20px;line-height:22px;color:#1d2532;">Unreviewed</div><div class="r" style="left:1177px;top:817px;width:140px;height:39px;background:#e3f6ef;border-radius:20px"></div><div class="t" style="left:1188.88px;top:825.30px;font-size:20.20px;line-height:22px;color:#18936c;">Unreachable</div><div class="t" style="left:1416.06px;top:822.80px;font-size:22.80px;line-height:26px;color:#1d2532;">7.5</div><div class="t" style="left:1624.32px;top:823.80px;font-size:22.30px;line-height:25px;color:#1d2532;">0</div><div class="t" style="left:1864.05px;top:821.80px;font-size:23.80px;line-height:27px;color:#1d2532;">centos</div><div class="t" style="left:2183.85px;top:821.80px;font-size:24.20px;line-height:27px;color:#1d2532;">bind-export-libs</div><svg class="r" style="left:2360px;top:823px;" width="26" height="28" viewBox="0 0 26 28"><g fill="none" stroke="#0a3190" stroke-width="2.1" stroke-linecap="round" stroke-linejoin="round"><path d="M9.8,3.2 H17 L21.6,7.8 V15.5 A2.4,2.4 0 0 1 19.2,17.9 H11.4 A2.4,2.4 0 0 1 9,15.5 V4.8 A1.6,1.6 0 0 1 9.8,3.2 Z"/><path d="M6.5,8.6 H5.3 A2.3,2.3 0 0 0 3,10.9 V21.3 A2.3,2.3 0 0 0 5.3,23.6 H13.2 A2.3,2.3 0 0 0 15.5,21.3 V20.5"/></g></svg><div class="r" style="left:2505px;top:818px;width:66px;height:39px;background:#dadada;border-radius:20px"></div><div class="t" style="left:2516.68px;top:826.30px;font-size:19.00px;line-height:21px;color:#262b33;">RPM</div><div class="t" style="left:2744.19px;top:822.80px;font-size:23.10px;line-height:26px;color:#1d2532;">32:9.11.26-3.el8</div><svg class="r" style="left:2920px;top:823px;" width="26" height="28" viewBox="0 0 26 28"><g fill="none" stroke="#0a3190" stroke-width="2.1" stroke-linecap="round" stroke-linejoin="round"><path d="M9.8,3.2 H17 L21.6,7.8 V15.5 A2.4,2.4 0 0 1 19.2,17.9 H11.4 A2.4,2.4 0 0 1 9,15.5 V4.8 A1.6,1.6 0 0 1 9.8,3.2 Z"/><path d="M6.5,8.6 H5.3 A2.3,2.3 0 0 0 3,10.9 V21.3 A2.3,2.3 0 0 0 5.3,23.6 H13.2 A2.3,2.3 0 0 0 15.5,21.3 V20.5"/></g></svg><div class="t" style="left:3384.29px;top:823.40px;font-size:23.20px;line-height:26px;color:#1d2532;">07/23/2024, 11:15:05 AM</div><svg class="r" style="left:3693px;top:824px;" width="12" height="26" viewBox="0 0 12 26"><g fill="#1d2532"><circle cx="6" cy="4.6" r="1.6"/><circle cx="6" cy="12.8" r="1.6"/><circle cx="6" cy="21" r="1.6"/></g></svg><div class="r" style="left:412px;top:942px;width:3319px;height:1px;background:#e1e6ec"></div><div class="r" style="left:441px;top:894px;width:25px;height:25px;border:2.6px solid #8b8b8b;border-radius:3px;box-sizing:border-box"></div><div class="t" style="left:485.10px;top:894.10px;font-size:21.90px;line-height:25px;color:#1d2532;">CVE-2022-25236</div><svg class="r" style="left:666px;top:893px;" width="26" height="28" viewBox="0 0 26 28"><g fill="none" stroke="#0a3190" stroke-width="2.1" stroke-linecap="round" stroke-linejoin="round"><path d="M9.8,3.2 H17 L21.6,7.8 V15.5 A2.4,2.4 0 0 1 19.2,17.9 H11.4 A2.4,2.4 0 0 1 9,15.5 V4.8 A1.6,1.6 0 0 1 9.8,3.2 Z"/><path d="M6.5,8.6 H5.3 A2.3,2.3 0 0 0 3,10.9 V21.3 A2.3,2.3 0 0 0 5.3,23.6 H13.2 A2.3,2.3 0 0 0 15.5,21.3 V20.5"/></g></svg><div class="r" style="left:761px;top:885px;width:88px;height:45px;background:#f5334f;border-radius:23px"></div><div class="t" style="left:778.80px;top:892.10px;font-size:23.80px;line-height:27px;color:#fff;">High</div><div class="r" style="left:969px;top:890px;width:132px;height:38px;background:#e9eaec;border-radius:19px"></div><div class="t" style="left:980.49px;top:897.60px;font-size:20.20px;line-height:22px;color:#1d2532;">Unreviewed</div><div class="r" style="left:1177px;top:888px;width:118px;height:38px;background:#fde7ea;border-radius:19px"></div><div class="t" style="left:1188.42px;top:895.70px;font-size:19.70px;line-height:22px;color:#d22a3c;">Reachable</div><div class="t" style="left:1416.29px;top:893.20px;font-size:22.80px;line-height:26px;color:#1d2532;">8.3</div><div class="t" style="left:1624.32px;top:894.20px;font-size:22.30px;line-height:25px;color:#1d2532;">0.03</div><div class="t" style="left:1864.05px;top:892.20px;font-size:23.80px;line-height:27px;color:#1d2532;">centos</div><div class="t" style="left:2184.33px;top:892.20px;font-size:24.20px;line-height:27px;color:#1d2532;">expat</div><svg class="r" style="left:2255px;top:893px;" width="26" height="28" viewBox="0 0 26 28"><g fill="none" stroke="#0a3190" stroke-width="2.1" stroke-linecap="round" stroke-linejoin="round"><path d="M9.8,3.2 H17 L21.6,7.8 V15.5 A2.4,2.4 0 0 1 19.2,17.9 H11.4 A2.4,2.4 0 0 1 9,15.5 V4.8 A1.6,1.6 0 0 1 9.8,3.2 Z"/><path d="M6.5,8.6 H5.3 A2.3,2.3 0 0 0 3,10.9 V21.3 A2.3,2.3 0 0 0 5.3,23.6 H13.2 A2.3,2.3 0 0 0 15.5,21.3 V20.5"/></g></svg><div class="r" style="left:2505px;top:888px;width:66px;height:39px;background:#dadada;border-radius:20px"></div><div class="t" style="left:2516.68px;top:896.70px;font-size:19.00px;line-height:21px;color:#262b33;">RPM</div><div class="t" style="left:2743.84px;top:893.20px;font-size:23.10px;line-height:26px;color:#1d2532;">2.2.5-4.el8</div><svg class="r" style="left:2863px;top:893px;" width="26" height="28" viewBox="0 0 26 28"><g fill="none" stroke="#0a3190" stroke-width="2.1" stroke-linecap="round" stroke-linejoin="round"><path d="M9.8,3.2 H17 L21.6,7.8 V15.5 A2.4,2.4 0 0 1 19.2,17.9 H11.4 A2.4,2.4 0 0 1 9,15.5 V4.8 A1.6,1.6 0 0 1 9.8,3.2 Z"/><path d="M6.5,8.6 H5.3 A2.3,2.3 0 0 0 3,10.9 V21.3 A2.3,2.3 0 0 0 5.3,23.6 H13.2 A2.3,2.3 0 0 0 15.5,21.3 V20.5"/></g></svg><div class="t" style="left:3064.31px;top:894.20px;font-size:22.60px;line-height:25px;color:#1d2532;">0:2.2.5-4.el8_5.3</div><div class="t" style="left:3384.29px;top:893.80px;font-size:23.20px;line-height:26px;color:#1d2532;">02/15/2022, 08:15:07 PM</div><svg class="r" style="left:3693px;top:894px;" width="12" height="26" viewBox="0 0 12 26"><g fill="#1d2532"><circle cx="6" cy="4.6" r="1.6"/><circle cx="6" cy="12.8" r="1.6"/><circle cx="6" cy="21" r="1.6"/></g></svg><div class="r" style="left:412px;top:1013px;width:3319px;height:1px;background:#e1e6ec"></div><div class="r" style="left:441px;top:965px;width:25px;height:25px;border:2.6px solid #8b8b8b;border-radius:3px;box-sizing:border-box"></div><div class="t" style="left:485.10px;top:964.50px;font-size:21.90px;line-height:25px;color:#1d2532;">CVE-2022-25315</div><svg class="r" style="left:666px;top:964px;" width="26" height="28" viewBox="0 0 26 28"><g fill="none" stroke="#0a3190" stroke-width="2.1" stroke-linecap="round" stroke-linejoin="round"><path d="M9.8,3.2 H17 L21.6,7.8 V15.5 A2.4,2.4 0 0 1 19.2,17.9 H11.4 A2.4,2.4 0 0 1 9,15.5 V4.8 A1.6,1.6 0 0 1 9.8,3.2 Z"/><path d="M6.5,8.6 H5.3 A2.3,2.3 0 0 0 3,10.9 V21.3 A2.3,2.3 0 0 0 5.3,23.6 H13.2 A2.3,2.3 0 0 0 15.5,21.3 V20.5"/></g></svg><div class="r" style="left:761px;top:955px;width:88px;height:45px;background:#f5334f;border-radius:23px"></div><div class="t" style="left:778.80px;top:962.50px;font-size:23.80px;line-height:27px;color:#fff;">High</div><div class="r" style="left:969px;top:960px;width:132px;height:38px;background:#e9eaec;border-radius:19px"></div><div class="t" style="left:980.49px;top:968.00px;font-size:20.20px;line-height:22px;color:#1d2532;">Unreviewed</div><div class="r" style="left:1177px;top:958px;width:118px;height:38px;background:#fde7ea;border-radius:19px"></div><div class="t" style="left:1188.42px;top:966.10px;font-size:19.70px;line-height:22px;color:#d22a3c;">Reachable</div><div class="t" style="left:1416.29px;top:963.60px;font-size:22.80px;line-height:26px;color:#1d2532;">8.3</div><div class="t" style="left:1624.32px;top:964.60px;font-size:22.30px;line-height:25px;color:#1d2532;">0.02</div><div class="t" style="left:1864.05px;top:962.60px;font-size:23.80px;line-height:27px;color:#1d2532;">centos</div><div class="t" style="left:2184.33px;top:962.60px;font-size:24.20px;line-height:27px;color:#1d2532;">expat</div><svg class="r" style="left:2255px;top:964px;" width="26" height="28" viewBox="0 0 26 28"><g fill="none" stroke="#0a3190" stroke-width="2.1" stroke-linecap="round" stroke-linejoin="round"><path d="M9.8,3.2 H17 L21.6,7.8 V15.5 A2.4,2.4 0 0 1 19.2,17.9 H11.4 A2.4,2.4 0 0 1 9,15.5 V4.8 A1.6,1.6 0 0 1 9.8,3.2 Z"/><path d="M6.5,8.6 H5.3 A2.3,2.3 0 0 0 3,10.9 V21.3 A2.3,2.3 0 0 0 5.3,23.6 H13.2 A2.3,2.3 0 0 0 15.5,21.3 V20.5"/></g></svg><div class="r" style="left:2505px;top:958px;width:66px;height:39px;background:#dadada;border-radius:20px"></div><div class="t" style="left:2516.68px;top:967.10px;font-size:19.00px;line-height:21px;color:#262b33;">RPM</div><div class="t" style="left:2743.84px;top:963.60px;font-size:23.10px;line-height:26px;color:#1d2532;">2.2.5-4.el8</div><svg class="r" style="left:2863px;top:964px;" width="26" height="28" viewBox="0 0 26 28"><g fill="none" stroke="#0a3190" stroke-width="2.1" stroke-linecap="round" stroke-linejoin="round"><path d="M9.8,3.2 H17 L21.6,7.8 V15.5 A2.4,2.4 0 0 1 19.2,17.9 H11.4 A2.4,2.4 0 0 1 9,15.5 V4.8 A1.6,1.6 0 0 1 9.8,3.2 Z"/><path d="M6.5,8.6 H5.3 A2.3,2.3 0 0 0 3,10.9 V21.3 A2.3,2.3 0 0 0 5.3,23.6 H13.2 A2.3,2.3 0 0 0 15.5,21.3 V20.5"/></g></svg><div class="t" style="left:3064.31px;top:964.60px;font-size:22.60px;line-height:25px;color:#1d2532;">0:2.2.5-4.el8_5.3</div><div class="t" style="left:3384.29px;top:964.20px;font-size:23.20px;line-height:26px;color:#1d2532;">02/18/2022, 12:15:08 AM</div><svg class="r" style="left:3693px;top:965px;" width="12" height="26" viewBox="0 0 12 26"><g fill="#1d2532"><circle cx="6" cy="4.6" r="1.6"/><circle cx="6" cy="12.8" r="1.6"/><circle cx="6" cy="21" r="1.6"/></g></svg><div class="r" style="left:412px;top:1083px;width:3319px;height:1px;background:#e1e6ec"></div><div class="r" style="left:441px;top:1035px;width:25px;height:25px;border:2.6px solid #8b8b8b;border-radius:3px;box-sizing:border-box"></div><div class="t" style="left:485.10px;top:1034.90px;font-size:21.90px;line-height:25px;color:#1d2532;">CVE-2022-38178</div><svg class="r" style="left:666px;top:1034px;" width="26" height="28" viewBox="0 0 26 28"><g fill="none" stroke="#0a3190" stroke-width="2.1" stroke-linecap="round" stroke-linejoin="round"><path d="M9.8,3.2 H17 L21.6,7.8 V15.5 A2.4,2.4 0 0 1 19.2,17.9 H11.4 A2.4,2.4 0 0 1 9,15.5 V4.8 A1.6,1.6 0 0 1 9.8,3.2 Z"/><path d="M6.5,8.6 H5.3 A2.3,2.3 0 0 0 3,10.9 V21.3 A2.3,2.3 0 0 0 5.3,23.6 H13.2 A2.3,2.3 0 0 0 15.5,21.3 V20.5"/></g></svg><div class="r" style="left:761px;top:1026px;width:88px;height:45px;background:#f5334f;border-radius:23px"></div><div class="t" style="left:778.80px;top:1032.90px;font-size:23.80px;line-height:27px;color:#fff;">High</div><div class="r" style="left:969px;top:1031px;width:132px;height:38px;background:#e9eaec;border-radius:19px"></div><div class="t" style="left:980.49px;top:1038.40px;font-size:20.20px;line-height:22px;color:#1d2532;">Unreviewed</div><div class="r" style="left:1177px;top:1029px;width:140px;height:39px;background:#e3f6ef;border-radius:20px"></div><div class="t" style="left:1188.88px;top:1036.50px;font-size:20.20px;line-height:22px;color:#18936c;">Unreachable</div><div class="t" style="left:1416.06px;top:1034.00px;font-size:22.80px;line-height:26px;color:#1d2532;">7.5</div><div class="t" style="left:1624.32px;top:1035.00px;font-size:22.30px;line-height:25px;color:#1d2532;">0</div><div class="t" style="left:1864.05px;top:1033.00px;font-size:23.80px;line-height:27px;color:#1d2532;">centos</div><div class="t" style="left:2183.85px;top:1033.00px;font-size:24.20px;line-height:27px;color:#1d2532;">bind-export-libs</div><svg class="r" style="left:2360px;top:1034px;" width="26" height="28" viewBox="0 0 26 28"><g fill="none" stroke="#0a3190" stroke-width="2.1" stroke-linecap="round" stroke-linejoin="round"><path d="M9.8,3.2 H17 L21.6,7.8 V15.5 A2.4,2.4 0 0 1 19.2,17.9 H11.4 A2.4,2.4 0 0 1 9,15.5 V4.8 A1.6,1.6 0 0 1 9.8,3.2 Z"/><path d="M6.5,8.6 H5.3 A2.3,2.3 0 0 0 3,10.9 V21.3 A2.3,2.3 0 0 0 5.3,23.6 H13.2 A2.3,2.3 0 0 0 15.5,21.3 V20.5"/></g></svg><div class="r" style="left:2505px;top:1029px;width:66px;height:39px;background:#dadada;border-radius:20px"></div><div class="t" style="left:2516.68px;top:1037.50px;font-size:19.00px;line-height:21px;color:#262b33;">RPM</div><div class="t" style="left:2744.19px;top:1034.00px;font-size:23.10px;line-height:26px;color:#1d2532;">32:9.11.26-3.el8</div><svg class="r" style="left:2920px;top:1034px;" width="26" height="28" viewBox="0 0 26 28"><g fill="none" stroke="#0a3190" stroke-width="2.1" stroke-linecap="round" stroke-linejoin="round"><path d="M9.8,3.2 H17 L21.6,7.8 V15.5 A2.4,2.4 0 0 1 19.2,17.9 H11.4 A2.4,2.4 0 0 1 9,15.5 V4.8 A1.6,1.6 0 0 1 9.8,3.2 Z"/><path d="M6.5,8.6 H5.3 A2.3,2.3 0 0 0 3,10.9 V21.3 A2.3,2.3 0 0 0 5.3,23.6 H13.2 A2.3,2.3 0 0 0 15.5,21.3 V20.5"/></g></svg><div class="t" style="left:3064.31px;top:1035.00px;font-size:22.60px;line-height:25px;color:#1d2532;">32:9.11.36-3.el8_6.1</div><div class="t" style="left:3384.29px;top:1034.60px;font-size:23.20px;line-height:26px;color:#1d2532;">09/21/2022, 07:15:09 AM</div><svg class="r" style="left:3693px;top:1035px;" width="12" height="26" viewBox="0 0 12 26"><g fill="#1d2532"><circle cx="6" cy="4.6" r="1.6"/><circle cx="6" cy="12.8" r="1.6"/><circle cx="6" cy="21" r="1.6"/></g></svg><div class="r" style="left:412px;top:1154px;width:3319px;height:1px;background:#e1e6ec"></div><div class="r" style="left:441px;top:1106px;width:25px;height:25px;border:2.6px solid #8b8b8b;border-radius:3px;box-sizing:border-box"></div><div class="t" style="left:485.10px;top:1105.30px;font-size:21.90px;line-height:25px;color:#1d2532;">CVE-2023-2828</div><svg class="r" style="left:653px;top:1105px;" width="26" height="28" viewBox="0 0 26 28"><g fill="none" stroke="#0a3190" stroke-width="2.1" stroke-linecap="round" stroke-linejoin="round"><path d="M9.8,3.2 H17 L21.6,7.8 V15.5 A2.4,2.4 0 0 1 19.2,17.9 H11.4 A2.4,2.4 0 0 1 9,15.5 V4.8 A1.6,1.6 0 0 1 9.8,3.2 Z"/><path d="M6.5,8.6 H5.3 A2.3,2.3 0 0 0 3,10.9 V21.3 A2.3,2.3 0 0 0 5.3,23.6 H13.2 A2.3,2.3 0 0 0 15.5,21.3 V20.5"/></g></svg><div class="r" style="left:761px;top:1096px;width:88px;height:45px;background:#f5334f;border-radius:23px"></div><div class="t" style="left:778.80px;top:1103.30px;font-size:23.80px;line-height:27px;color:#fff;">High</div><div class="r" style="left:969px;top:1101px;width:132px;height:38px;background:#e9eaec;border-radius:19px"></div><div class="t" style="left:980.49px;top:1108.80px;font-size:20.20px;line-height:22px;color:#1d2532;">Unreviewed</div><div class="r" style="left:1177px;top:1099px;width:140px;height:39px;background:#e3f6ef;border-radius:20px"></div><div class="t" style="left:1188.88px;top:1106.90px;font-size:20.20px;line-height:22px;color:#18936c;">Unreachable</div><div class="t" style="left:1416.06px;top:1104.40px;font-size:22.80px;line-height:26px;color:#1d2532;">7.5</div><div class="t" style="left:1624.32px;top:1105.40px;font-size:22.30px;line-height:25px;color:#1d2532;">0</div><div class="t" style="left:1864.05px;top:1103.40px;font-size:23.80px;line-height:27px;color:#1d2532;">centos</div><div class="t" style="left:2183.85px;top:1103.40px;font-size:24.20px;line-height:27px;color:#1d2532;">bind-export-libs</div><svg class="r" style="left:2360px;top:1105px;" width="26" height="28" viewBox="0 0 26 28"><g fill="none" stroke="#0a3190" stroke-width="2.1" stroke-linecap="round" stroke-linejoin="round"><path d="M9.8,3.2 H17 L21.6,7.8 V15.5 A2.4,2.4 0 0 1 19.2,17.9 H11.4 A2.4,2.4 0 0 1 9,15.5 V4.8 A1.6,1.6 0 0 1 9.8,3.2 Z"/><path d="M6.5,8.6 H5.3 A2.3,2.3 0 0 0 3,10.9 V21.3 A2.3,2.3 0 0 0 5.3,23.6 H13.2 A2.3,2.3 0 0 0 15.5,21.3 V20.5"/></g></svg><div class="r" style="left:2505px;top:1099px;width:66px;height:39px;background:#dadada;border-radius:20px"></div><div class="t" style="left:2516.68px;top:1107.90px;font-size:19.00px;line-height:21px;color:#262b33;">RPM</div><div class="t" style="left:2744.19px;top:1104.40px;font-size:23.10px;line-height:26px;color:#1d2532;">32:9.11.26-3.el8</div><svg class="r" style="left:2920px;top:1105px;" width="26" height="28" viewBox="0 0 26 28"><g fill="none" stroke="#0a3190" stroke-width="2.1" stroke-linecap="round" stroke-linejoin="round"><path d="M9.8,3.2 H17 L21.6,7.8 V15.5 A2.4,2.4 0 0 1 19.2,17.9 H11.4 A2.4,2.4 0 0 1 9,15.5 V4.8 A1.6,1.6 0 0 1 9.8,3.2 Z"/><path d="M6.5,8.6 H5.3 A2.3,2.3 0 0 0 3,10.9 V21.3 A2.3,2.3 0 0 0 5.3,23.6 H13.2 A2.3,2.3 0 0 0 15.5,21.3 V20.5"/></g></svg><div class="t" style="left:3064.31px;top:1105.40px;font-size:22.60px;line-height:25px;color:#1d2532;">32:9.11.36-8.el8_8.1</div><div class="t" style="left:3384.29px;top:1105.00px;font-size:23.20px;line-height:26px;color:#1d2532;">06/21/2023, 01:15:47 PM</div><svg class="r" style="left:3693px;top:1106px;" width="12" height="26" viewBox="0 0 12 26"><g fill="#1d2532"><circle cx="6" cy="4.6" r="1.6"/><circle cx="6" cy="12.8" r="1.6"/><circle cx="6" cy="21" r="1.6"/></g></svg><div class="r" style="left:3731px;top:610px;width:12px;height:580px;background:#d9d9d9;border-radius:6px"></div><svg class="r" style="left:3758px;top:506px;" width="22" height="20" viewBox="0 0 22 20"><g fill="none" stroke="#1b2026" stroke-width="2"><rect x="4" y="4.3" width="14" height="12.6"/><path d="M4,8.5 H18 M4,12.7 H18"/></g></svg><div class="t" style="left:3780.40px;top:536.41px;font-size:21.7px;line-height:25px;color:#1b2026;transform:rotate(90deg);transform-origin:0 0">Columns</div><div class="r" style="left:3792px;top:439px;width:10px;height:727px;background:#f2f2f2"></div></div>
<div class="r" style="left:14px;top:836px;width:196px;height:73px;border:8.5px solid #00a9a4;border-radius:37px;box-sizing:border-box;background:#fff;box-shadow:2px 3px 4px rgba(0,0,0,0.45), inset 2px 3px 4px rgba(0,0,0,0.45)"></div><div class="t" style="left:47.69px;top:861.70px;font-size:22.78px;line-height:26px;color:#0b3482;font-weight:700;">Containers</div><svg class="r" style="left:0;top:0;filter:drop-shadow(1px 2px 1.5px rgba(60,40,30,0.55))" width="460" height="1170" viewBox="0 0 460 1170"><path d="M242,874 C260,862 282.85,846.25 298.85,846.25 A27.75,27.75 0 0 1 298.85,901.75 C282.85,901.75 260,886 242,874 Z" fill="#00a9a4"/></svg><div class="t" style="left:284.49px;top:855.70px;font-size:33.50px;line-height:37px;color:#fff;-webkit-text-stroke:0.8px #fff;">1</div><svg class="r" style="left:0;top:0;filter:drop-shadow(1px 2px 1.5px rgba(60,40,30,0.55))" width="460" height="1170" viewBox="0 0 460 1170"><path d="M424.2,621.1 C406.2,609.1 380.9,593.3000000000001 364.9,593.3000000000001 A27.8,27.8 0 0 0 364.9,648.9 C380.9,648.9 406.2,633.1 424.2,621.1 Z" fill="#00a9a4"/></svg><div class="t" style="left:359.12px;top:604.00px;font-size:33.50px;line-height:37px;color:#fff;-webkit-text-stroke:0.8px #fff;">2</div>
<div class="r" style="left:0;top:1166px;width:3806px;height:4px;background:#000"></div>
</body></html>
